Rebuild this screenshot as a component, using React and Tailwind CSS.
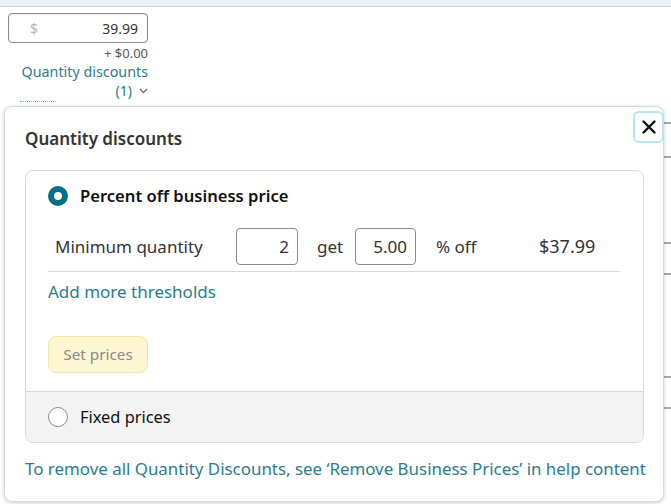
import React from "react";

const font = { fontFamily: "'Noto Sans', 'Liberation Sans', Arial, sans-serif" };

function Radio({ checked }) {
  return checked ? (
    <span className="inline-block w-5 h-5 rounded-full border-[6px] border-[#007185] bg-white shrink-0" />
  ) : (
    <span className="inline-block w-5 h-5 rounded-full border border-[#888c8c] bg-white shrink-0" />
  );
}

export default function App() {
  return (
    <div
      className="relative w-[671px] h-[504px] overflow-hidden bg-white text-[#0f1111]"
      style={font}
    >
      {/* top strip */}
      <div className="h-[7px] bg-[#eaf3fc] border-b border-[#cfd3d6]" />

      {/* price cell */}
      <div className="w-[140px] ml-2 mt-[6px] flex flex-col items-end">
        <div className="w-full h-[30px] border border-[#888c8c] rounded-[4px] flex items-center justify-between pl-[21px] pr-[9px] text-[14px] shadow-[inset_0_1px_2px_rgba(0,0,0,0.08)]">
          <span className="text-[#b5b8b8]">$</span>
          <span className="text-[#333]">39.99</span>
        </div>
        <div className="mt-[1px] text-[13px] leading-[18px] text-[#565959]">+ $0.00</div>
        <div className="text-[14.3px] leading-[19px] text-[#2a7d8f]">Quantity discounts</div>
        <div className="text-[14px] leading-[19px] text-[#2a7d8f] flex items-center gap-[7px]">
          (1)
          <svg width="9" height="6" viewBox="0 0 9 6" fill="none" stroke="#6b7070" strokeWidth="1.3">
            <path d="M1 1l3.5 3.5L8 1" />
          </svg>
        </div>
        <div className="self-start ml-[12px] mt-[1px] h-[4px] w-[36px] border-t border-dotted border-[#7aa9b5]" />
      </div>

      {/* right edge background rows */}
      <div className="absolute right-0 top-[122px] w-[8px] h-[36px] border-t-2 border-b-2 border-[#a8a8a8]" />
      <div className="absolute right-0 top-[242px] w-[8px] h-[33px] border-t-2 border-b-2 border-[#a8a8a8]" />
      <div className="absolute right-0 top-[376px] w-[8px] h-[33px] border-t-2 border-b-2 border-[#a8a8a8]" />

      {/* popover */}
      <div className="absolute left-[4px] top-[106px] w-[660px] h-[396px] bg-white border border-[#d5d9d9] rounded-[8px] shadow-[0_1px_4px_rgba(0,0,0,0.18)] pl-[20px] pr-[19px] pt-[18px]">
        <div className="flex items-start justify-between">
          <h2 className="text-[17px] leading-[26px] font-semibold text-[#333] mt-[1px]">Quantity discounts</h2>
          <button className="-mt-[14px] -mr-[20px] w-[31px] h-[32px] rounded-[6px] border-2 border-[#b7e6ee] flex items-center justify-center">
            <svg width="16" height="16" viewBox="0 0 16 16" stroke="#0f1111" strokeWidth="2.4" strokeLinecap="round">
              <path d="M2.5 2.5l11 11M13.5 2.5l-11 11" />
            </svg>
          </button>
        </div>

        {/* card */}
        <div className="mt-[18px] border border-[#d5d9d9] rounded-[8px] overflow-hidden">
          <div className="pl-[22px] pr-[23px] pt-[15px] pb-[18px]">
            <label className="flex items-center gap-[12px] h-[20px]">
              <Radio checked />
              <span className="text-[16.6px] font-semibold text-[#0f1111]">Percent off business price</span>
            </label>

            <div className="mt-[22px] flex items-center h-[37px] text-[17px] text-[#333]">
              <span className="w-[188px] pl-[7px]">Minimum quantity</span>
              <div className="w-[62px] h-[37px] border border-[#888c8c] rounded-[4px] flex items-center justify-end pr-[8px]">2</div>
              <span className="w-[57px] pl-[19px]">get</span>
              <div className="w-[61px] h-[37px] border border-[#888c8c] rounded-[4px] flex items-center justify-end pr-[8px]">5.00</div>
              <span className="w-[123px] pl-[20px]">% off</span>
              <span className="text-[18px]">$37.99</span>
            </div>
            <div className="mt-[6px] border-t border-[#d5d9d9]" />

            <div className="mt-[9px] text-[17px] leading-[22px] text-[#2a7d8f]">Add more thresholds</div>

            <button className="mt-[33px] w-[100px] h-[37px] rounded-[8px] bg-[#fdf6d3] border border-[#f5e6a6] text-[15.3px] text-[#8a8a8a]">
              Set prices
            </button>
          </div>
          <div className="h-[51px] bg-[#f3f3f3] border-t border-[#d5d9d9] flex items-center gap-[12px] pl-[22px]">
            <Radio />
            <span className="text-[16.4px] text-[#0f1111]">Fixed prices</span>
          </div>
        </div>

        <p className="mt-[15px] text-[16.9px] leading-[22px] text-[#2a7d8f] whitespace-nowrap">
          To remove all Quantity Discounts, see ‘Remove Business Prices’ in help content
        </p>
      </div>
    </div>
  );
}
